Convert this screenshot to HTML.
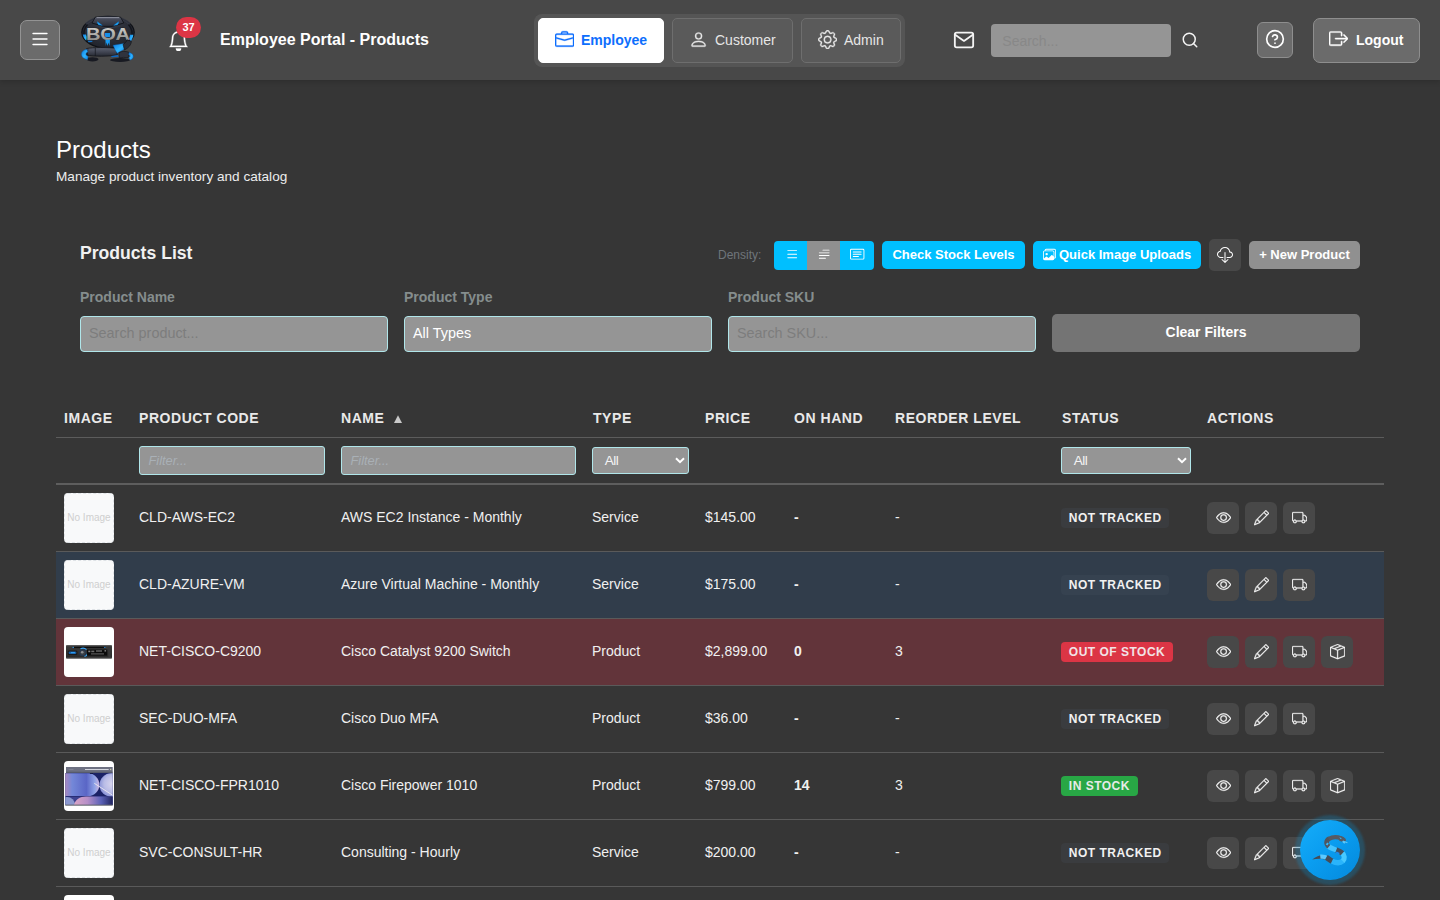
<!DOCTYPE html>
<html lang="en">
<head>
<meta charset="utf-8">
<title>Employee Portal - Products</title>
<style>
*{box-sizing:border-box;}
html,body{margin:0;padding:0;}
body{width:1440px;height:900px;overflow:hidden;background:#363636;color:#f1f1f1;font-family:"Liberation Sans",sans-serif;font-size:14px;position:relative;}
svg{display:block;}
.abs{position:absolute;}
/* ---------- header ---------- */
#hdr{position:absolute;left:0;top:0;width:1440px;height:80px;background:#484848;box-shadow:0 2px 5px rgba(0,0,0,.16);z-index:2;}
#burger{position:absolute;left:20px;top:20px;width:40px;height:40px;background:#6b6b6b;border:1px solid #939393;border-radius:7px;}
#burger svg{position:absolute;left:0;top:0;}
#logo{position:absolute;left:76px;top:10px;width:64px;height:58px;}
#bell{position:absolute;left:168px;top:29.500px;}
#badge{position:absolute;left:176px;top:17px;width:25px;height:21px;border-radius:10.500px;background:#dc3545;color:#fff;font-weight:bold;font-size:11px;line-height:20px;text-align:center;}
#ptitle{position:absolute;left:220px;top:30px;font-size:16px;font-weight:bold;color:#fff;line-height:20px;white-space:nowrap;}
#switch{position:absolute;left:534px;top:14px;width:371px;height:53px;background:#555555;border-radius:8px;}
.sw{position:absolute;top:4px;height:45px;border-radius:5px;border:1px solid #6e6e6e;background:#5a5a5a;color:#e6e6e6;font-size:14px;line-height:43px;white-space:nowrap;}
.sw svg{position:absolute;top:10.500px;}
.sw span{position:absolute;top:0;}
.sw.on{background:#fff;border-color:#fff;color:#0d6efd;font-weight:bold;}
#mail{position:absolute;left:953px;top:29px;}
#srch{position:absolute;left:991px;top:24px;width:180px;height:33px;background:#959595;border-radius:4px;color:#888;font-size:14px;line-height:34px;padding-left:11.300px;}
#sico{position:absolute;left:1181px;top:31px;}
#help{position:absolute;left:1257px;top:22px;width:36px;height:36px;background:#6b6b6b;border:1px solid #8e8e8e;border-radius:6px;}
#help svg{position:absolute;left:6.700px;top:5.700px;}
#logout{position:absolute;left:1313px;top:18px;width:107px;height:45px;background:#6b6b6b;border:1px solid #8e8e8e;border-radius:7px;color:#fff;font-weight:bold;font-size:14px;line-height:43px;}
#logout svg{position:absolute;left:14.800px;top:10.400px;}
#logout span{position:absolute;left:42px;top:0;}
/* ---------- page head ---------- */
#h1{position:absolute;left:56px;top:134px;font-size:24px;line-height:32px;color:#fff;}
#sub{position:absolute;left:56px;top:167.700px;font-size:13.600px;line-height:18px;color:#ededed;}
#h2{position:absolute;left:80px;top:242px;font-size:17.600px;font-weight:bold;line-height:22px;color:#f1f1f1;}
#dens{position:absolute;left:718px;top:247px;font-size:12px;line-height:16px;color:#6f757b;}
#dgrp{position:absolute;left:774px;top:241px;width:100px;height:29px;border-radius:4px;overflow:hidden;background:#00bfff;}
#dgrp .m{position:absolute;left:33px;top:0;width:33px;height:29px;background:#909090;}
#dgrp svg{position:absolute;top:5.900px;}
.tb{position:absolute;top:241px;height:28px;border-radius:5px;background:#00bfff;color:#fff;font-weight:bold;font-size:13px;line-height:27px;text-align:center;white-space:nowrap;}
/* ---------- filters ---------- */
.flab{position:absolute;top:288px;font-size:14px;font-weight:bold;line-height:18px;color:#858d8d;}
.fin{position:absolute;top:316px;height:36px;width:308px;background:#959595;border:1px solid #b0e6ea;border-radius:4px;font-size:14.400px;line-height:32px;padding-left:8px;color:#7d7d7d;}
#clr{position:absolute;left:1052px;top:313.700px;width:308px;height:38.300px;background:#747474;border-radius:5px;color:#fff;font-weight:bold;font-size:14px;line-height:37px;text-align:center;}
/* ---------- table ---------- */
.th{position:absolute;top:409.100px;font-size:14px;font-weight:bold;letter-spacing:.55px;line-height:18px;color:#e9e9e9;white-space:nowrap;}
.hl{position:absolute;left:56px;width:1328px;background:#5c5c5c;height:1px;}
.cf{position:absolute;top:446px;height:29px;background:#959595;border:1px solid #b0e6ea;border-radius:3px;font-size:12.800px;font-style:italic;line-height:27px;padding-left:8.500px;color:#a9b0b6;}
.cs{position:absolute;top:447px;height:27px;background:#959595;border:1px solid #b0e6ea;border-radius:3px;font-size:13.600px;line-height:26px;padding-left:11.800px;color:#f4f4f4;letter-spacing:-.6px;}
.cs svg{position:absolute;right:3.300px;top:9px;}
.row{position:absolute;left:56px;width:1328px;height:67px;border-bottom:1px solid #5a5a5a;}
.row.sel{background:#313d4b;}
.row.oos{background:#62343a;}
.c{position:absolute;top:22px;font-size:14px;line-height:20px;color:#f0f0f0;white-space:nowrap;}
.c.b{font-weight:bold;font-size:14px;}
.thumb{position:absolute;left:8px;top:8px;width:50px;height:50px;border-radius:4px;background:#f8f9fa;border:1px dashed #dee2e6;color:#cfcfcf;font-size:10px;line-height:48px;text-align:center;overflow:hidden;white-space:nowrap;}
.thumb.img{background:#fff;border:0;}
.bdg{position:absolute;top:23.200px;height:19.800px;border-radius:4px;font-size:12px;font-weight:bold;letter-spacing:.5px;line-height:20.600px;padding:0 7.800px;color:#f1f1f1;background:#3a3c3f;white-space:nowrap;}
.row.sel .bdg{background:#364250;}
.bdg.r{background:#dc3545;color:#f1e3e6;}
.bdg.g{background:#28a745;color:#e6ebe7;}
.ab{position:absolute;top:16.800px;width:32px;height:32.400px;border-radius:6px;background:#484848;}
.ab svg{position:absolute;left:8.800px;top:8.600px;}
#fab{position:absolute;left:1300px;top:820px;width:60px;height:60px;border-radius:50%;background:linear-gradient(135deg,#16adf9 0%,#0a9df0 45%,#0489dc 100%);box-shadow:0 0 2.500px 5px rgba(0,165,240,.23);}
</style>
</head>
<body>
<div id="hdr">
  <div id="burger"><svg width="38" height="38" viewBox="0 0 38 38" fill="#fff"><rect x="11.300" y="11.750" width="15.400" height="1.600" rx=".8"/><rect x="11.300" y="17.250" width="15.400" height="1.600" rx=".8"/><rect x="11.300" y="22.750" width="15.400" height="1.600" rx=".8"/></svg></div>
  <svg id="logo" viewBox="76 10 64 58"><defs>
<linearGradient id="lgS" x1="0" y1="0" x2="0" y2="1"><stop offset="0" stop-color="#d9d9d6"/><stop offset=".5" stop-color="#b0afab"/><stop offset="1" stop-color="#787774"/></linearGradient>
<linearGradient id="lgB" x1="0" y1="0" x2="1" y2="1"><stop offset="0" stop-color="#0c78dc"/><stop offset=".55" stop-color="#2fb4ff"/><stop offset="1" stop-color="#0d86e6"/></linearGradient>
<linearGradient id="lgH" x1="0" y1="0" x2="0" y2="1"><stop offset="0" stop-color="#5b5f6e"/><stop offset=".25" stop-color="#454957"/><stop offset="1" stop-color="#2b2e39"/></linearGradient>
<linearGradient id="lgT" x1="0" y1="0" x2="0" y2="1"><stop offset="0" stop-color="#5c6170"/><stop offset=".55" stop-color="#3f4350"/><stop offset="1" stop-color="#262932"/></linearGradient>
<radialGradient id="lgE" cx=".5" cy=".35" r=".7"><stop offset="0" stop-color="#3a3e4a"/><stop offset="1" stop-color="#1d2028"/></radialGradient>
</defs>
<ellipse cx="92.500" cy="59.300" rx="6" ry="2.100" fill="#181a22"/><ellipse cx="120" cy="60" rx="10" ry="1.900" fill="#181a22"/>
<ellipse cx="108" cy="32.300" rx="26.200" ry="16" fill="url(#lgE)" stroke="#0e1016" stroke-width="1.200"/>
<path d="M86 24c5-5 12-7 22-7s17 2 22 7" fill="none" stroke="#3b3f4b" stroke-width="2.500" opacity=".7"/>
<path d="M84.500 38c-1.500-5 0-10 3-13.500M131.500 38c1.500-5 0-10-3-13.500" fill="none" stroke="#14161d" stroke-width="1.500"/>
<path d="M95.300 17.100h25.200l3.300 5.900-11.800 3.400h-8.400l-11.600-3.400z" fill="url(#lgH)" stroke="#12141a" stroke-width=".9"/>
<path d="M96.500 17.600h22.800" stroke="#9a9eac" stroke-width=".9"/>
<path d="M97.300 21.500l5.200 3.900-3.900-.5-1.200-1.700zM118.700 21.500l-5.200 3.900 3.900-.5 1.200-1.700z" fill="#1ea7fa" stroke="#0a63b8" stroke-width=".3"/>
<path d="M92 26.500l12 1.800h8l12-1.800-6 5.500-10 2-10-2z" fill="#2a2d37"/>
<path d="M82.800 34.600c.3 2 1.300 4.200 3.200 5.900l1.800-2.500c-.9-1.200-1.500-2.300-1.800-3.600z" fill="url(#lgB)"/>
<path d="M133.300 34.800c-.2 2.200-1 4.300-2.300 6.200l-2.400-1.400c.8-1.500 1.300-3 1.500-4.800z" fill="url(#lgB)"/>
<path d="M87.600 40.300l5 .1-.4 1.500-3.800.4z" fill="#1272c8"/>
<rect x="104.500" y="33" width="5.600" height="4.200" fill="#1590ea"/>
<g transform="translate(86 40.200) scale(1.210 1)"><text x="0" y="0" font-family="Liberation Sans, sans-serif" font-weight="bold" font-size="16.600" fill="url(#lgS)" stroke="#24252b" stroke-width=".9" paint-order="stroke" letter-spacing="-.2">BOA</text></g>
<path d="M105.400 39.800h4.600l-.5 6.200-1-3.500-.9 3.600-1-3.600-.8 3.400z" fill="#189af2"/>
<path d="M86.600 48.500c6-1.200 22-1.200 29.500-.2l1.200 6.500c-8 1.800-24 1.800-30.500.3z" fill="url(#lgT)" stroke="#101218" stroke-width=".8"/>
<path d="M95.300 48v8M88 49.500c-1 2-1 4 0 6" stroke="#14161c" stroke-width=".7" fill="none"/>
<path d="M113 45.200l10.700-1.800 1.400 5.300-7.900 4.600-2-3.200z" fill="url(#lgB)" stroke="#0a4f9a" stroke-width=".4"/>
<path d="M131.500 41.500c-.5 3.500-3 6.500-7 8.500l-1.500-5.600c2-1 3.500-2.500 4.300-4.600z" fill="#2b2e38" stroke="#101218" stroke-width=".6"/>
<path d="M87 49.300c-3 .3-5.500 2.200-5.600 5 0 2.600 2.400 4.600 6.200 5.400l.5-3.300c-1.700-.6-2.200-1.400-2.200-2.300 0-1 .8-1.700 2-2.100z" fill="url(#lgB)" stroke="#0a4f9a" stroke-width=".4"/>
<path d="M119 52.600c3-1.500 6.500-1.700 10-.3l-.8 5.700c-3-.8-6-.8-9 0z" fill="#30333e" stroke="#101218" stroke-width=".6"/>
<path d="M129 52.300c2.500.6 4.300 2.200 4.300 4.200 0 1.600-1.200 2.900-3.300 3.600l-1.200-2.600c.9-.4 1.300-.9 1.300-1.400s-.5-1-1.400-1.400z" fill="url(#lgB)" stroke="#0a4f9a" stroke-width=".4"/>
<path d="M111 55.900l7-1 .8 1.900-7 .5z" fill="#1068c0"/>
</svg>
  <svg id="bell" width="21" height="21" viewBox="0 0 16 16" fill="#fff" stroke="#fff" stroke-width=".25"><path d="M8 16a2 2 0 0 0 2-2H6a2 2 0 0 0 2 2M8 1.918l-.797.161A4 4 0 0 0 4 6c0 .628-.134 2.197-.459 3.742-.16.767-.376 1.566-.663 2.258h10.244c-.287-.692-.502-1.49-.663-2.258C12.134 8.197 12 6.628 12 6a4 4 0 0 0-3.203-3.92zM14.22 12c.223.447.481.801.78 1H1c.299-.199.557-.553.78-1C2.68 10.200 3 6.880 3 6c0-2.420 1.720-4.440 4.005-4.901a1 1 0 1 1 1.990 0A5 5 0 0 1 13 6c0 .880.320 4.200 1.220 6"/></svg>
  <div id="badge">37</div>
  <div id="ptitle">Employee Portal - Products</div>
  <div id="switch">
    <div class="sw on" style="left:4px;width:126px;"><svg style="left:15.500px" width="19.200" height="19.200" viewBox="0 0 16 16" fill="#0d6efd" stroke="#0d6efd" stroke-width=".25"><path d="M6.5 1A1.5 1.5 0 0 0 5 2.5V3H1.5A1.5 1.5 0 0 0 0 4.5v8A1.5 1.5 0 0 0 1.5 14h13a1.5 1.5 0 0 0 1.5-1.5v-8A1.5 1.5 0 0 0 14.5 3H11v-.5A1.5 1.5 0 0 0 9.5 1zm0 1h3a.5.5 0 0 1 .5.5V3H6v-.5a.5.5 0 0 1 .5-.5m1.886 6.914L15 7.151V12.5a.5.5 0 0 1-.5.5h-13a.5.5 0 0 1-.5-.5V7.150l6.614 1.764a1.500 1.500 0 0 0 .772 0M1.500 4h13a.5.5 0 0 1 .5.5v1.616L8.129 7.948a.5.5 0 0 1-.258 0L1 6.116V4.500a.5.5 0 0 1 .5-.5"/></svg><span style="left:42px">Employee</span></div>
    <div class="sw" style="left:138px;width:121px;"><svg style="left:15.500px" width="19.200" height="19.200" viewBox="0 0 16 16" fill="#e6e6e6" stroke="#e6e6e6" stroke-width=".25"><path d="M8 8a3 3 0 1 0 0-6 3 3 0 0 0 0 6m2-3a2 2 0 1 1-4 0 2 2 0 0 1 4 0m4 8c0 1-1 1-1 1H3s-1 0-1-1 1-4 6-4 6 3 6 4m-1-.004c-.001-.246-.154-.986-.832-1.664C11.516 10.680 10.289 10 8 10s-3.516.680-4.168 1.332c-.678.678-.830 1.418-.832 1.664z"/></svg><span style="left:42px">Customer</span></div>
    <div class="sw" style="left:267px;width:100px;"><svg style="left:15.500px" width="19.200" height="19.200" viewBox="0 0 16 16" fill="#e6e6e6" stroke="#e6e6e6" stroke-width=".25"><path d="M8 4.754a3.246 3.246 0 1 0 0 6.492 3.246 3.246 0 0 0 0-6.492M5.754 8a2.246 2.246 0 1 1 4.492 0 2.246 2.246 0 0 1-4.492 0"/><path d="M9.796 1.343c-.527-1.790-3.065-1.790-3.592 0l-.094.319a.873.873 0 0 1-1.255.520l-.292-.160c-1.640-.892-3.433.902-2.540 2.541l.159.292a.873.873 0 0 1-.520 1.255l-.319.094c-1.790.527-1.790 3.065 0 3.592l.319.094a.873.873 0 0 1 .520 1.255l-.160.292c-.892 1.640.901 3.434 2.541 2.540l.292-.159a.873.873 0 0 1 1.255.520l.094.319c.527 1.790 3.065 1.790 3.592 0l.094-.319a.873.873 0 0 1 1.255-.520l.292.160c1.640.893 3.434-.902 2.540-2.541l-.159-.292a.873.873 0 0 1 .520-1.255l.319-.094c1.790-.527 1.790-3.065 0-3.592l-.319-.094a.873.873 0 0 1-.520-1.255l.160-.292c.893-1.640-.902-3.433-2.541-2.540l-.292.159a.873.873 0 0 1-1.255-.520zm-2.633.283c.246-.835 1.428-.835 1.674 0l.094.319a1.873 1.873 0 0 0 2.693 1.115l.291-.160c.764-.415 1.600.420 1.184 1.185l-.159.292a1.873 1.873 0 0 0 1.116 2.692l.318.094c.835.246.835 1.428 0 1.674l-.319.094a1.873 1.873 0 0 0-1.115 2.693l.160.291c.415.764-.420 1.600-1.185 1.184l-.291-.159a1.873 1.873 0 0 0-2.693 1.116l-.094.318c-.246.835-1.428.835-1.674 0l-.094-.319a1.873 1.873 0 0 0-2.692-1.115l-.292.160c-.764.415-1.600-.420-1.184-1.185l.159-.291A1.873 1.873 0 0 0 1.945 8.930l-.319-.094c-.835-.246-.835-1.428 0-1.674l.319-.094A1.873 1.873 0 0 0 3.060 4.377l-.160-.292c-.415-.764.420-1.600 1.185-1.184l.292.159a1.873 1.873 0 0 0 2.692-1.115z"/></svg><span style="left:42px">Admin</span></div>
  </div>
  <svg id="mail" width="22" height="22" viewBox="0 0 24 24" fill="none" stroke="#f4f4f4" stroke-width="2" stroke-linecap="round" stroke-linejoin="round"><path d="M4 4h16c1.100 0 2 .900 2 2v12c0 1.100-.900 2-2 2H4c-1.100 0-2-.900-2-2V6c0-1.100.900-2 2-2z"/><polyline points="22,6 12,13 2,6"/></svg>
  <div id="srch">Search...</div>
  <svg id="sico" width="18" height="18" viewBox="0 0 24 24" fill="none" stroke="#f4f4f4" stroke-width="2" stroke-linecap="round" stroke-linejoin="round"><circle cx="11" cy="11" r="8"/><line x1="21" y1="21" x2="16.650" y2="16.650"/></svg>
  <div id="help"><svg width="20" height="20" viewBox="0 0 24 24" fill="none" stroke="#fff" stroke-width="2" stroke-linecap="round" stroke-linejoin="round"><circle cx="12" cy="12" r="10"/><path d="M9.090 9a3 3 0 0 1 5.830 1c0 2-3 3-3 3"/><line x1="12" y1="17" x2="12.010" y2="17"/></svg></div>
  <div id="logout"><svg width="19.200" height="19.200" viewBox="0 0 16 16" fill="#fff" stroke="#fff" stroke-width=".35"><path fill-rule="evenodd" d="M10 12.500a.5.5 0 0 1-.5.5h-8a.5.5 0 0 1-.5-.5v-9a.5.5 0 0 1 .5-.5h8a.5.5 0 0 1 .5.5v2a.5.5 0 0 0 1 0v-2A1.500 1.500 0 0 0 9.500 2h-8A1.500 1.500 0 0 0 0 3.500v9A1.500 1.500 0 0 0 1.500 14h8a1.500 1.500 0 0 0 1.500-1.500v-2a.5.5 0 0 0-1 0z"/><path fill-rule="evenodd" d="M15.854 8.354a.5.5 0 0 0 0-.708l-3-3a.5.5 0 0 0-.708.708L14.293 7.500H5.500a.5.5 0 0 0 0 1h8.793l-2.147 2.146a.5.5 0 0 0 .708.708z"/></svg><span>Logout</span></div>
</div>

<div id="h1">Products</div>
<div id="sub">Manage product inventory and catalog</div>
<div id="h2">Products List</div>
<div id="dens">Density:</div>
<div id="dgrp"><div class="m"></div>
  <svg style="left:10.550px" width="14.400" height="14.400" viewBox="0 0 16 16" fill="#fff"><path fill-rule="evenodd" d="M2.5 12a.5.5 0 0 1 .5-.5h10a.5.5 0 0 1 0 1H3a.5.5 0 0 1-.5-.5m0-4a.5.5 0 0 1 .5-.5h10a.5.5 0 0 1 0 1H3a.5.5 0 0 1-.5-.5m0-4a.5.5 0 0 1 .5-.5h10a.5.5 0 0 1 0 1H3a.5.5 0 0 1-.5-.5"/></svg>
  <svg style="left:43.100px" width="14.400" height="14.400" viewBox="0 0 16 16" fill="#fff"><path fill-rule="evenodd" d="M2 12.500a.5.5 0 0 1 .5-.5h7a.5.5 0 0 1 0 1h-7a.5.5 0 0 1-.5-.5m0-3a.5.5 0 0 1 .5-.5h11a.5.5 0 0 1 0 1h-11a.5.5 0 0 1-.5-.5m0-3a.5.5 0 0 1 .5-.5h11a.5.5 0 0 1 0 1h-11a.5.5 0 0 1-.5-.5m4-3a.5.5 0 0 1 .5-.5h7a.5.5 0 0 1 0 1h-7a.5.5 0 0 1-.5-.5"/></svg>
  <svg style="left:76.300px" width="14.400" height="14.400" viewBox="0 0 16 16" fill="#fff"><path d="M14.500 3a.5.5 0 0 1 .5.5v9a.5.5 0 0 1-.5.5h-13a.5.5 0 0 1-.5-.5v-9a.5.5 0 0 1 .5-.5zm-13-1A1.500 1.500 0 0 0 0 3.500v9A1.500 1.500 0 0 0 1.500 14h13a1.500 1.500 0 0 0 1.500-1.500v-9A1.500 1.500 0 0 0 14.500 2z"/><path d="M3 5.500a.5.5 0 0 1 .5-.5h9a.5.5 0 0 1 0 1h-9a.5.5 0 0 1-.5-.5M3 8a.5.5 0 0 1 .5-.5h9a.5.5 0 0 1 0 1h-9A.5.5 0 0 1 3 8m0 2.500a.5.5 0 0 1 .5-.5h6a.5.5 0 0 1 0 1h-6a.5.5 0 0 1-.5-.5"/></svg>
</div>
<div class="tb" style="left:882px;width:143px;">Check Stock Levels</div>
<div class="tb" style="left:1033px;width:168px;"><svg style="position:absolute;left:10px;top:7.200px" width="13" height="13" viewBox="0 0 16 16" fill="#fff"><path d="M4.502 9a1.500 1.500 0 1 0 0-3 1.500 1.500 0 0 0 0 3"/><path d="M14.002 13a2 2 0 0 1-2 2h-10a2 2 0 0 1-2-2V5A2 2 0 0 1 2 3a2 2 0 0 1 2-2h10a2 2 0 0 1 2 2v8a2 2 0 0 1-1.998 2M14 2H4a1 1 0 0 0-1 1h9.002a2 2 0 0 1 2 2v7A1 1 0 0 0 15 11V3a1 1 0 0 0-1-1M2.002 4a1 1 0 0 0-1 1v8l2.646-2.354a.5.5 0 0 1 .630-.062l2.660 1.773 3.710-3.710a.5.5 0 0 1 .577-.094l1.777 1.947V5a1 1 0 0 0-1-1z"/></svg><span style="position:absolute;left:26px;top:0">Quick Image Uploads</span></div>
<div class="tb" style="left:1209px;width:32px;top:239px;height:32px;background:#484848;border-radius:5px;"><svg style="position:absolute;left:8px;top:8px" width="16" height="16" viewBox="0 0 16 16" fill="#fff"><path d="M4.406 1.342A5.530 5.530 0 0 1 8 0c2.690 0 4.923 2 5.166 4.579C14.758 4.804 16 6.137 16 7.773 16 9.569 14.502 11 12.687 11H10a.5.5 0 0 1 0-1h2.688C13.979 10 15 8.988 15 7.773c0-1.216-1.020-2.228-2.313-2.228h-.5v-.5C12.188 2.825 10.328 1 8 1a4.530 4.530 0 0 0-2.941 1.100c-.757.652-1.153 1.438-1.153 2.055v.448l-.445.049C2.064 4.805 1 5.952 1 7.318 1 8.785 2.230 10 3.781 10H6a.5.5 0 0 1 0 1H3.781C1.708 11 0 9.366 0 7.318c0-1.763 1.266-3.223 2.942-3.593.143-.863.698-1.723 1.464-2.383"/><path d="M7.646 15.854a.5.5 0 0 0 .708 0l3-3a.5.5 0 0 0-.708-.708L8.500 14.293V5.500a.5.5 0 0 0-1 0v8.793l-2.146-2.147a.5.5 0 0 0-.708.708z"/></svg></div>
<div class="tb" style="left:1249px;width:111px;background:#909090;">+ New Product</div>

<div class="flab" style="left:80px">Product Name</div>
<div class="flab" style="left:404px">Product Type</div>
<div class="flab" style="left:728px">Product SKU</div>
<div class="fin" style="left:80px">Search product...</div>
<div class="fin" style="left:404px;color:#fff">All Types</div>
<div class="fin" style="left:728px">Search SKU...</div>
<div id="clr">Clear Filters</div>

<div class="th" style="left:64px">IMAGE</div>
<div class="th" style="left:139px">PRODUCT CODE</div>
<div class="th" style="left:341px">NAME</div>
<div class="th" style="left:593px">TYPE</div>
<div class="th" style="left:705px">PRICE</div>
<div class="th" style="left:794px">ON HAND</div>
<div class="th" style="left:895px">REORDER LEVEL</div>
<div class="th" style="left:1062px">STATUS</div>
<div class="th" style="left:1207px">ACTIONS</div>
<svg class="abs" style="left:393px;top:414px" width="10" height="10" viewBox="0 0 10 10"><polygon points="1,9.100 9,9.100 5,1.300" fill="#c9c9c9"/></svg>
<div class="hl" style="top:437px"></div>
<div class="cf" style="left:139px;width:186px">Filter...</div>
<div class="cf" style="left:341px;width:235px">Filter...</div>
<div class="cs" style="left:592px;width:97px">All<svg width="10" height="7" viewBox="0 0 10 7" fill="none" stroke="#fff" stroke-width="2"><path d="M1 1.200 5 5.200 9 1.200"/></svg></div>
<div class="cs" style="left:1061px;width:130px">All<svg width="10" height="7" viewBox="0 0 10 7" fill="none" stroke="#fff" stroke-width="2"><path d="M1 1.200 5 5.200 9 1.200"/></svg></div>
<div class="hl" style="top:483px;height:2px;background:#5e5e5e"></div>
<div class="row " style="top:485px"><div class="thumb">No Image</div><div class="c" style="left:83px">CLD-AWS-EC2</div><div class="c" style="left:285px">AWS EC2 Instance - Monthly</div><div class="c" style="left:536px">Service</div><div class="c" style="left:649px">$145.00</div><div class="c b" style="left:738px">-</div><div class="c" style="left:839px">-</div><div class="bdg " style="left:1005px">NOT TRACKED</div><div class="ab" style="left:1151px"><svg width="15.200" height="15.200" viewBox="0 0 16 16" fill="#f4f4f4" stroke="#f4f4f4" stroke-width=".25"><path d="M16 8s-3-5.500-8-5.500S0 8 0 8s3 5.500 8 5.500S16 8 16 8M1.173 8a13 13 0 0 1 1.660-2.043C4.120 4.668 5.880 3.500 8 3.500s3.879 1.168 5.168 2.457A13 13 0 0 1 14.828 8q-.086.130-.195.288c-.335.480-.830 1.120-1.465 1.755C11.879 11.332 10.119 12.500 8 12.500s-3.879-1.168-5.168-2.457A13 13 0 0 1 1.172 8z"/><path d="M8 5.500a2.500 2.500 0 1 0 0 5 2.500 2.500 0 0 0 0-5M4.500 8a3.500 3.500 0 1 1 7 0 3.500 3.500 0 0 1-7 0"/></svg></div><div class="ab" style="left:1189px"><svg width="15.200" height="15.200" viewBox="0 0 16 16" fill="#f4f4f4" stroke="#f4f4f4" stroke-width=".25"><path d="M12.146.146a.5.5 0 0 1 .708 0l3 3a.5.5 0 0 1 0 .708l-10 10a.5.5 0 0 1-.168.110l-5 2a.5.5 0 0 1-.650-.650l2-5a.5.5 0 0 1 .110-.168zM11.207 2.500 13.500 4.793 14.793 3.500 12.500 1.207zm1.586 3L10.500 3.207 4 9.707V10h.5a.5.5 0 0 1 .5.5v.5h.5a.5.5 0 0 1 .5.5v.5h.293zm-9.761 5.175-.106.106-1.528 3.821 3.821-1.528.106-.106A.5.5 0 0 1 5 12.500V12h-.5a.5.5 0 0 1-.5-.5V11h-.5a.5.5 0 0 1-.468-.325"/></svg></div><div class="ab" style="left:1227px"><svg width="15.200" height="15.200" viewBox="0 0 16 16" fill="#f4f4f4" stroke="#f4f4f4" stroke-width=".25"><path d="M0 3.500A1.500 1.500 0 0 1 1.500 2h9A1.500 1.500 0 0 1 12 3.500V5h1.020a1.500 1.500 0 0 1 1.170.563l1.481 1.850a1.500 1.500 0 0 1 .329.938V10.500a1.500 1.500 0 0 1-1.500 1.500H14a2 2 0 1 1-4 0H5a2 2 0 1 1-3.998-.085A1.500 1.500 0 0 1 0 10.500zm1.294 7.456A2 2 0 0 1 4.732 11h5.536a2 2 0 0 1 .732-.732V3.500a.5.5 0 0 0-.5-.5h-9a.5.5 0 0 0-.5.5v7a.5.5 0 0 0 .294.456M12 10a2 2 0 0 1 1.732 1h.768a.5.5 0 0 0 .5-.5V8.350a.5.5 0 0 0-.110-.312l-1.480-1.850A.5.5 0 0 0 13.020 6H12zm-9 1a1 1 0 1 0 0 2 1 1 0 0 0 0-2m9 0a1 1 0 1 0 0 2 1 1 0 0 0 0-2"/></svg></div></div>
<div class="row sel" style="top:552px"><div class="thumb">No Image</div><div class="c" style="left:83px">CLD-AZURE-VM</div><div class="c" style="left:285px">Azure Virtual Machine - Monthly</div><div class="c" style="left:536px">Service</div><div class="c" style="left:649px">$175.00</div><div class="c b" style="left:738px">-</div><div class="c" style="left:839px">-</div><div class="bdg " style="left:1005px">NOT TRACKED</div><div class="ab" style="left:1151px"><svg width="15.200" height="15.200" viewBox="0 0 16 16" fill="#f4f4f4" stroke="#f4f4f4" stroke-width=".25"><path d="M16 8s-3-5.500-8-5.500S0 8 0 8s3 5.500 8 5.500S16 8 16 8M1.173 8a13 13 0 0 1 1.660-2.043C4.120 4.668 5.880 3.500 8 3.500s3.879 1.168 5.168 2.457A13 13 0 0 1 14.828 8q-.086.130-.195.288c-.335.480-.830 1.120-1.465 1.755C11.879 11.332 10.119 12.500 8 12.500s-3.879-1.168-5.168-2.457A13 13 0 0 1 1.172 8z"/><path d="M8 5.500a2.500 2.500 0 1 0 0 5 2.500 2.500 0 0 0 0-5M4.500 8a3.500 3.500 0 1 1 7 0 3.500 3.500 0 0 1-7 0"/></svg></div><div class="ab" style="left:1189px"><svg width="15.200" height="15.200" viewBox="0 0 16 16" fill="#f4f4f4" stroke="#f4f4f4" stroke-width=".25"><path d="M12.146.146a.5.5 0 0 1 .708 0l3 3a.5.5 0 0 1 0 .708l-10 10a.5.5 0 0 1-.168.110l-5 2a.5.5 0 0 1-.650-.650l2-5a.5.5 0 0 1 .110-.168zM11.207 2.500 13.500 4.793 14.793 3.500 12.500 1.207zm1.586 3L10.500 3.207 4 9.707V10h.5a.5.5 0 0 1 .5.5v.5h.5a.5.5 0 0 1 .5.5v.5h.293zm-9.761 5.175-.106.106-1.528 3.821 3.821-1.528.106-.106A.5.5 0 0 1 5 12.500V12h-.5a.5.5 0 0 1-.5-.5V11h-.5a.5.5 0 0 1-.468-.325"/></svg></div><div class="ab" style="left:1227px"><svg width="15.200" height="15.200" viewBox="0 0 16 16" fill="#f4f4f4" stroke="#f4f4f4" stroke-width=".25"><path d="M0 3.500A1.500 1.500 0 0 1 1.500 2h9A1.500 1.500 0 0 1 12 3.500V5h1.020a1.500 1.500 0 0 1 1.170.563l1.481 1.850a1.500 1.500 0 0 1 .329.938V10.500a1.500 1.500 0 0 1-1.500 1.500H14a2 2 0 1 1-4 0H5a2 2 0 1 1-3.998-.085A1.500 1.500 0 0 1 0 10.500zm1.294 7.456A2 2 0 0 1 4.732 11h5.536a2 2 0 0 1 .732-.732V3.500a.5.5 0 0 0-.5-.5h-9a.5.5 0 0 0-.5.5v7a.5.5 0 0 0 .294.456M12 10a2 2 0 0 1 1.732 1h.768a.5.5 0 0 0 .5-.5V8.350a.5.5 0 0 0-.110-.312l-1.480-1.850A.5.5 0 0 0 13.020 6H12zm-9 1a1 1 0 1 0 0 2 1 1 0 0 0 0-2m9 0a1 1 0 1 0 0 2 1 1 0 0 0 0-2"/></svg></div></div>
<div class="row oos" style="top:619px"><div class="thumb img"><svg width="50" height="50" viewBox="0 0 50 50" style="position:absolute;left:0;top:0"><defs><linearGradient id="swg" x1="0" y1="0" x2="0" y2="1"><stop offset="0" stop-color="#6a6a6a"/><stop offset=".12" stop-color="#3a3a3a"/><stop offset=".85" stop-color="#2a2a2a"/><stop offset="1" stop-color="#555"/></linearGradient></defs>
<rect x="2" y="18" width="46" height="13.700" rx=".8" fill="url(#swg)"/>
<rect x="10" y="19.800" width="31.500" height="1.300" fill="#0c0c0c"/>
<rect x="8.600" y="19.900" width="1.200" height="1.100" fill="#2a9cf0"/><rect x="40.300" y="19.900" width="1.100" height="1.100" fill="#2a9cf0"/>
<rect x="3.800" y="23.600" width="9.600" height="4.300" rx="1.200" fill="#1b1b1b"/>
<rect x="4.600" y="24.500" width="7.800" height="2.500" rx="1.200" fill="#1a5fa3"/><rect x="6.800" y="25" width="4.300" height="1.300" rx=".6" fill="#2f9cf0"/>
<circle cx="18.700" cy="25.700" r="3.600" fill="#24364d"/><circle cx="18.700" cy="25.700" r="2.500" fill="#3b3f45"/><circle cx="18.200" cy="25.200" r="1.300" fill="#8d9094"/>
<path d="M16.500 21.800c2-1 4.500-.6 6 .8" stroke="#39a4f4" stroke-width="1.100" fill="none"/><path d="M20.500 29.600c1.500-.5 2.600-1.600 3-3" stroke="#39a4f4" stroke-width="1.100" fill="none"/>
<rect x="23" y="22.600" width="20.300" height="6" fill="#0b0b0b"/>
<rect x="24.300" y="23.600" width="2" height="1.600" fill="#8a8a8a"/><rect x="27.300" y="23.600" width="3" height="1.600" fill="#6d6d6d"/><rect x="32" y="23.400" width="6" height="1.200" fill="#7a7a7a"/><rect x="27" y="26.300" width="13" height="1.200" fill="#5a5a5a"/><rect x="40.500" y="23" width="1.600" height="1.600" fill="#777"/>
<rect x="44.300" y="19.500" width="2.500" height="10.500" fill="#383838"/>
</svg></div><div class="c" style="left:83px">NET-CISCO-C9200</div><div class="c" style="left:285px">Cisco Catalyst 9200 Switch</div><div class="c" style="left:536px">Product</div><div class="c" style="left:649px">$2,899.00</div><div class="c b" style="left:738px">0</div><div class="c" style="left:839px">3</div><div class="bdg r" style="left:1005px">OUT OF STOCK</div><div class="ab" style="left:1151px"><svg width="15.200" height="15.200" viewBox="0 0 16 16" fill="#f4f4f4" stroke="#f4f4f4" stroke-width=".25"><path d="M16 8s-3-5.500-8-5.500S0 8 0 8s3 5.500 8 5.500S16 8 16 8M1.173 8a13 13 0 0 1 1.660-2.043C4.120 4.668 5.880 3.500 8 3.500s3.879 1.168 5.168 2.457A13 13 0 0 1 14.828 8q-.086.130-.195.288c-.335.480-.830 1.120-1.465 1.755C11.879 11.332 10.119 12.500 8 12.500s-3.879-1.168-5.168-2.457A13 13 0 0 1 1.172 8z"/><path d="M8 5.500a2.500 2.500 0 1 0 0 5 2.500 2.500 0 0 0 0-5M4.500 8a3.500 3.500 0 1 1 7 0 3.500 3.500 0 0 1-7 0"/></svg></div><div class="ab" style="left:1189px"><svg width="15.200" height="15.200" viewBox="0 0 16 16" fill="#f4f4f4" stroke="#f4f4f4" stroke-width=".25"><path d="M12.146.146a.5.5 0 0 1 .708 0l3 3a.5.5 0 0 1 0 .708l-10 10a.5.5 0 0 1-.168.110l-5 2a.5.5 0 0 1-.650-.650l2-5a.5.5 0 0 1 .110-.168zM11.207 2.500 13.500 4.793 14.793 3.500 12.500 1.207zm1.586 3L10.500 3.207 4 9.707V10h.5a.5.5 0 0 1 .5.5v.5h.5a.5.5 0 0 1 .5.5v.5h.293zm-9.761 5.175-.106.106-1.528 3.821 3.821-1.528.106-.106A.5.5 0 0 1 5 12.500V12h-.5a.5.5 0 0 1-.5-.5V11h-.5a.5.5 0 0 1-.468-.325"/></svg></div><div class="ab" style="left:1227px"><svg width="15.200" height="15.200" viewBox="0 0 16 16" fill="#f4f4f4" stroke="#f4f4f4" stroke-width=".25"><path d="M0 3.500A1.500 1.500 0 0 1 1.500 2h9A1.500 1.500 0 0 1 12 3.500V5h1.020a1.500 1.500 0 0 1 1.170.563l1.481 1.850a1.500 1.500 0 0 1 .329.938V10.500a1.500 1.500 0 0 1-1.500 1.500H14a2 2 0 1 1-4 0H5a2 2 0 1 1-3.998-.085A1.500 1.500 0 0 1 0 10.500zm1.294 7.456A2 2 0 0 1 4.732 11h5.536a2 2 0 0 1 .732-.732V3.500a.5.5 0 0 0-.5-.5h-9a.5.5 0 0 0-.5.5v7a.5.5 0 0 0 .294.456M12 10a2 2 0 0 1 1.732 1h.768a.5.5 0 0 0 .5-.5V8.350a.5.5 0 0 0-.110-.312l-1.480-1.850A.5.5 0 0 0 13.020 6H12zm-9 1a1 1 0 1 0 0 2 1 1 0 0 0 0-2m9 0a1 1 0 1 0 0 2 1 1 0 0 0 0-2"/></svg></div><div class="ab" style="left:1265px"><svg width="15.200" height="15.200" viewBox="0 0 16 16" fill="#f4f4f4" stroke="#f4f4f4" stroke-width=".25"><path d="M8.186 1.113a.5.5 0 0 0-.372 0L1.846 3.500l2.404.961L10.404 2zm3.564 1.426L5.596 5 8 5.961 14.154 3.500zm3.250 1.700-6.500 2.600v7.922l6.500-2.600V4.240zM7.500 14.762V6.838L1 4.239v7.923zM7.443.184a1.500 1.500 0 0 1 1.114 0l7.129 2.852A.5.5 0 0 1 16 3.500v8.662a1 1 0 0 1-.629.928l-7.185 2.874a.5.5 0 0 1-.372 0L.630 13.090a1 1 0 0 1-.630-.928V3.500a.5.5 0 0 1 .314-.464z"/></svg></div></div>
<div class="row " style="top:686px"><div class="thumb">No Image</div><div class="c" style="left:83px">SEC-DUO-MFA</div><div class="c" style="left:285px">Cisco Duo MFA</div><div class="c" style="left:536px">Product</div><div class="c" style="left:649px">$36.00</div><div class="c b" style="left:738px">-</div><div class="c" style="left:839px">-</div><div class="bdg " style="left:1005px">NOT TRACKED</div><div class="ab" style="left:1151px"><svg width="15.200" height="15.200" viewBox="0 0 16 16" fill="#f4f4f4" stroke="#f4f4f4" stroke-width=".25"><path d="M16 8s-3-5.500-8-5.500S0 8 0 8s3 5.500 8 5.500S16 8 16 8M1.173 8a13 13 0 0 1 1.660-2.043C4.120 4.668 5.880 3.500 8 3.500s3.879 1.168 5.168 2.457A13 13 0 0 1 14.828 8q-.086.130-.195.288c-.335.480-.830 1.120-1.465 1.755C11.879 11.332 10.119 12.500 8 12.500s-3.879-1.168-5.168-2.457A13 13 0 0 1 1.172 8z"/><path d="M8 5.500a2.500 2.500 0 1 0 0 5 2.500 2.500 0 0 0 0-5M4.500 8a3.500 3.500 0 1 1 7 0 3.500 3.500 0 0 1-7 0"/></svg></div><div class="ab" style="left:1189px"><svg width="15.200" height="15.200" viewBox="0 0 16 16" fill="#f4f4f4" stroke="#f4f4f4" stroke-width=".25"><path d="M12.146.146a.5.5 0 0 1 .708 0l3 3a.5.5 0 0 1 0 .708l-10 10a.5.5 0 0 1-.168.110l-5 2a.5.5 0 0 1-.650-.650l2-5a.5.5 0 0 1 .110-.168zM11.207 2.500 13.500 4.793 14.793 3.500 12.500 1.207zm1.586 3L10.500 3.207 4 9.707V10h.5a.5.5 0 0 1 .5.5v.5h.5a.5.5 0 0 1 .5.5v.5h.293zm-9.761 5.175-.106.106-1.528 3.821 3.821-1.528.106-.106A.5.5 0 0 1 5 12.500V12h-.5a.5.5 0 0 1-.5-.5V11h-.5a.5.5 0 0 1-.468-.325"/></svg></div><div class="ab" style="left:1227px"><svg width="15.200" height="15.200" viewBox="0 0 16 16" fill="#f4f4f4" stroke="#f4f4f4" stroke-width=".25"><path d="M0 3.500A1.500 1.500 0 0 1 1.500 2h9A1.500 1.500 0 0 1 12 3.500V5h1.020a1.500 1.500 0 0 1 1.170.563l1.481 1.850a1.500 1.500 0 0 1 .329.938V10.500a1.500 1.500 0 0 1-1.500 1.500H14a2 2 0 1 1-4 0H5a2 2 0 1 1-3.998-.085A1.500 1.500 0 0 1 0 10.500zm1.294 7.456A2 2 0 0 1 4.732 11h5.536a2 2 0 0 1 .732-.732V3.500a.5.5 0 0 0-.5-.5h-9a.5.5 0 0 0-.5.5v7a.5.5 0 0 0 .294.456M12 10a2 2 0 0 1 1.732 1h.768a.5.5 0 0 0 .5-.5V8.350a.5.5 0 0 0-.110-.312l-1.480-1.850A.5.5 0 0 0 13.020 6H12zm-9 1a1 1 0 1 0 0 2 1 1 0 0 0 0-2m9 0a1 1 0 1 0 0 2 1 1 0 0 0 0-2"/></svg></div></div>
<div class="row " style="top:753px"><div class="thumb img"><svg width="50" height="50" viewBox="0 0 50 50" style="position:absolute;left:0;top:0"><defs>
<linearGradient id="fp1" gradientUnits="userSpaceOnUse" x1="1.300" y1="0" x2="35.400" y2="0"><stop offset="0" stop-color="#a888c0"/><stop offset=".2" stop-color="#7488d8"/><stop offset=".62" stop-color="#5a66c6"/><stop offset=".86" stop-color="#8fa2e6"/><stop offset="1" stop-color="#cbb4e0"/></linearGradient>
<radialGradient id="fp2" cx=".55" cy=".45" r=".6"><stop offset="0" stop-color="#d9d6ee"/><stop offset=".6" stop-color="#b9bce6"/><stop offset="1" stop-color="#7f8ad4"/></radialGradient>
<linearGradient id="fp3" gradientUnits="userSpaceOnUse" x1="10" y1="0" x2="48.700" y2="0"><stop offset="0" stop-color="#dba6c6"/><stop offset=".35" stop-color="#b68fc8"/><stop offset=".7" stop-color="#5b62b8"/><stop offset="1" stop-color="#20245e"/></linearGradient>
<clipPath id="fpc"><rect x="1.300" y="12" width="47.400" height="32"/></clipPath></defs>
<rect x="2" y="6" width="46.700" height="5.600" fill="#6e7182"/><rect x="2" y="10.700" width="46.700" height="1.300" fill="#565a6c"/>
<rect x="21" y="8" width="23.700" height="1" fill="#d6d8e0"/><rect x="4.500" y="8.200" width="5" height=".7" fill="#8a8d9c"/><rect x="46" y="7.800" width="1.300" height="1.300" fill="#c9c9a8"/>
<rect x="1.300" y="12" width="47.400" height="32" fill="#1b2266"/>
<g clip-path="url(#fpc)">
<path d="M-8 12.300H24a11.400 11.400 0 0 1 0 22.800H-8z" fill="url(#fp1)"/>
<circle cx="47.300" cy="24" r="11.800" fill="url(#fp2)"/>
<rect x="1.300" y="35.600" width="47.400" height="8.400" fill="#3d418f"/>
<circle cx="3" cy="44" r="8" fill="#8b98cf"/>
<path d="M10 44C11 39 16 35.600 22 35.600H48.700V44z" fill="url(#fp3)"/>
<rect x="26" y="12" width="3" height=".7" fill="#0c0f30"/>
<path d="M30.300 22.300 48.700 34.300" stroke="#e6e3ee" stroke-width="1"/>
</g>
<rect x="1.300" y="43.600" width="47.400" height="1.100" fill="#62646e"/>
</svg></div><div class="c" style="left:83px">NET-CISCO-FPR1010</div><div class="c" style="left:285px">Cisco Firepower 1010</div><div class="c" style="left:536px">Product</div><div class="c" style="left:649px">$799.00</div><div class="c b" style="left:738px">14</div><div class="c" style="left:839px">3</div><div class="bdg g" style="left:1005px">IN STOCK</div><div class="ab" style="left:1151px"><svg width="15.200" height="15.200" viewBox="0 0 16 16" fill="#f4f4f4" stroke="#f4f4f4" stroke-width=".25"><path d="M16 8s-3-5.500-8-5.500S0 8 0 8s3 5.500 8 5.500S16 8 16 8M1.173 8a13 13 0 0 1 1.660-2.043C4.120 4.668 5.880 3.500 8 3.500s3.879 1.168 5.168 2.457A13 13 0 0 1 14.828 8q-.086.130-.195.288c-.335.480-.830 1.120-1.465 1.755C11.879 11.332 10.119 12.500 8 12.500s-3.879-1.168-5.168-2.457A13 13 0 0 1 1.172 8z"/><path d="M8 5.500a2.500 2.500 0 1 0 0 5 2.500 2.500 0 0 0 0-5M4.500 8a3.500 3.500 0 1 1 7 0 3.500 3.500 0 0 1-7 0"/></svg></div><div class="ab" style="left:1189px"><svg width="15.200" height="15.200" viewBox="0 0 16 16" fill="#f4f4f4" stroke="#f4f4f4" stroke-width=".25"><path d="M12.146.146a.5.5 0 0 1 .708 0l3 3a.5.5 0 0 1 0 .708l-10 10a.5.5 0 0 1-.168.110l-5 2a.5.5 0 0 1-.650-.650l2-5a.5.5 0 0 1 .110-.168zM11.207 2.500 13.500 4.793 14.793 3.500 12.500 1.207zm1.586 3L10.500 3.207 4 9.707V10h.5a.5.5 0 0 1 .5.5v.5h.5a.5.5 0 0 1 .5.5v.5h.293zm-9.761 5.175-.106.106-1.528 3.821 3.821-1.528.106-.106A.5.5 0 0 1 5 12.500V12h-.5a.5.5 0 0 1-.5-.5V11h-.5a.5.5 0 0 1-.468-.325"/></svg></div><div class="ab" style="left:1227px"><svg width="15.200" height="15.200" viewBox="0 0 16 16" fill="#f4f4f4" stroke="#f4f4f4" stroke-width=".25"><path d="M0 3.500A1.500 1.500 0 0 1 1.500 2h9A1.500 1.500 0 0 1 12 3.500V5h1.020a1.500 1.500 0 0 1 1.170.563l1.481 1.850a1.500 1.500 0 0 1 .329.938V10.500a1.500 1.500 0 0 1-1.500 1.500H14a2 2 0 1 1-4 0H5a2 2 0 1 1-3.998-.085A1.500 1.500 0 0 1 0 10.500zm1.294 7.456A2 2 0 0 1 4.732 11h5.536a2 2 0 0 1 .732-.732V3.500a.5.5 0 0 0-.5-.5h-9a.5.5 0 0 0-.5.5v7a.5.5 0 0 0 .294.456M12 10a2 2 0 0 1 1.732 1h.768a.5.5 0 0 0 .5-.5V8.350a.5.5 0 0 0-.110-.312l-1.480-1.850A.5.5 0 0 0 13.020 6H12zm-9 1a1 1 0 1 0 0 2 1 1 0 0 0 0-2m9 0a1 1 0 1 0 0 2 1 1 0 0 0 0-2"/></svg></div><div class="ab" style="left:1265px"><svg width="15.200" height="15.200" viewBox="0 0 16 16" fill="#f4f4f4" stroke="#f4f4f4" stroke-width=".25"><path d="M8.186 1.113a.5.5 0 0 0-.372 0L1.846 3.500l2.404.961L10.404 2zm3.564 1.426L5.596 5 8 5.961 14.154 3.500zm3.250 1.700-6.500 2.600v7.922l6.500-2.600V4.240zM7.500 14.762V6.838L1 4.239v7.923zM7.443.184a1.500 1.500 0 0 1 1.114 0l7.129 2.852A.5.5 0 0 1 16 3.500v8.662a1 1 0 0 1-.629.928l-7.185 2.874a.5.5 0 0 1-.372 0L.630 13.090a1 1 0 0 1-.630-.928V3.500a.5.5 0 0 1 .314-.464z"/></svg></div></div>
<div class="row " style="top:820px"><div class="thumb">No Image</div><div class="c" style="left:83px">SVC-CONSULT-HR</div><div class="c" style="left:285px">Consulting - Hourly</div><div class="c" style="left:536px">Service</div><div class="c" style="left:649px">$200.00</div><div class="c b" style="left:738px">-</div><div class="c" style="left:839px">-</div><div class="bdg " style="left:1005px">NOT TRACKED</div><div class="ab" style="left:1151px"><svg width="15.200" height="15.200" viewBox="0 0 16 16" fill="#f4f4f4" stroke="#f4f4f4" stroke-width=".25"><path d="M16 8s-3-5.500-8-5.500S0 8 0 8s3 5.500 8 5.500S16 8 16 8M1.173 8a13 13 0 0 1 1.660-2.043C4.120 4.668 5.880 3.500 8 3.500s3.879 1.168 5.168 2.457A13 13 0 0 1 14.828 8q-.086.130-.195.288c-.335.480-.830 1.120-1.465 1.755C11.879 11.332 10.119 12.500 8 12.500s-3.879-1.168-5.168-2.457A13 13 0 0 1 1.172 8z"/><path d="M8 5.500a2.500 2.500 0 1 0 0 5 2.500 2.500 0 0 0 0-5M4.500 8a3.500 3.500 0 1 1 7 0 3.500 3.500 0 0 1-7 0"/></svg></div><div class="ab" style="left:1189px"><svg width="15.200" height="15.200" viewBox="0 0 16 16" fill="#f4f4f4" stroke="#f4f4f4" stroke-width=".25"><path d="M12.146.146a.5.5 0 0 1 .708 0l3 3a.5.5 0 0 1 0 .708l-10 10a.5.5 0 0 1-.168.110l-5 2a.5.5 0 0 1-.650-.650l2-5a.5.5 0 0 1 .110-.168zM11.207 2.500 13.500 4.793 14.793 3.500 12.500 1.207zm1.586 3L10.500 3.207 4 9.707V10h.5a.5.5 0 0 1 .5.5v.5h.5a.5.5 0 0 1 .5.5v.5h.293zm-9.761 5.175-.106.106-1.528 3.821 3.821-1.528.106-.106A.5.5 0 0 1 5 12.500V12h-.5a.5.5 0 0 1-.5-.5V11h-.5a.5.5 0 0 1-.468-.325"/></svg></div><div class="ab" style="left:1227px"><svg width="15.200" height="15.200" viewBox="0 0 16 16" fill="#f4f4f4" stroke="#f4f4f4" stroke-width=".25"><path d="M0 3.500A1.500 1.500 0 0 1 1.500 2h9A1.500 1.500 0 0 1 12 3.500V5h1.020a1.500 1.500 0 0 1 1.170.563l1.481 1.850a1.500 1.500 0 0 1 .329.938V10.500a1.500 1.500 0 0 1-1.500 1.500H14a2 2 0 1 1-4 0H5a2 2 0 1 1-3.998-.085A1.500 1.500 0 0 1 0 10.500zm1.294 7.456A2 2 0 0 1 4.732 11h5.536a2 2 0 0 1 .732-.732V3.500a.5.5 0 0 0-.5-.5h-9a.5.5 0 0 0-.5.5v7a.5.5 0 0 0 .294.456M12 10a2 2 0 0 1 1.732 1h.768a.5.5 0 0 0 .5-.5V8.350a.5.5 0 0 0-.110-.312l-1.480-1.850A.5.5 0 0 0 13.020 6H12zm-9 1a1 1 0 1 0 0 2 1 1 0 0 0 0-2m9 0a1 1 0 1 0 0 2 1 1 0 0 0 0-2"/></svg></div></div>
<div class="row " style="top:887px"><div class="thumb img"></div></div>
<div id="fab"><svg width="60" height="60" viewBox="0 0 60 60" style="position:absolute;left:0;top:0"><g fill="none" stroke-linecap="butt">
<path d="M12.200 39.600C15.500 36.800 19.500 35 24 35L25.300 39.500C21 38.300 16.500 38.600 12.200 39.600Z" fill="#474c56" stroke="none"/>
<path d="M20.300 36.700C23 36.400 25.500 37 27.500 38.300" stroke="#5ccaff" stroke-width="4.200"/>
<path d="M26.300 37.400C28.500 38.600 30.300 40.300 32.500 41.300" stroke="#474c56" stroke-width="5.400"/>
<path d="M32 41.100C36 43 40.500 43 43 40.800" stroke="#2ab4fb" stroke-width="5.400"/>
<path d="M42.700 41.100C45 38.800 44.600 35 42 32.800" stroke="#48c9ff" stroke-width="5.200"/>
<path d="M42.500 33.300C40.500 31.500 38.300 30.700 35.800 29.800" stroke="#4a4f59" stroke-width="5.200"/>
<path d="M36.200 32.300L39.300 33.700" stroke="#1b8ef2" stroke-width="1.800"/>
<path d="M36.300 30C33.300 28.900 30.300 27.800 28.300 26.200" stroke="#45c4ff" stroke-width="5"/>
<path d="M28.800 26.700C25.700 24.300 25.700 20.500 29.300 18.600" stroke="#50555f" stroke-width="4.600"/>
<path d="M26.600 25L28 23" stroke="#36b8fa" stroke-width="2"/>
<path d="M28.800 18.900C32.300 16.900 37.300 16.800 40.800 18.300" stroke="#555a64" stroke-width="4.400"/>
</g>
<path d="M39.300 16.100C42.300 15.900 44.800 17.300 46 19.800L45.600 21.300C43.500 22 41 21.500 39.200 20.400z" fill="#555a64"/>
<path d="M43 20.600l4.600 1.600-.4 1-2-.6-.6 1.100c-1-.4-1.800-1.100-2.300-2z" fill="#5fc6f5"/>
<path d="M39.300 17.300l2.600.9-1.400.9z" fill="#35c2ff"/>
</svg></div>
</body>
</html>
